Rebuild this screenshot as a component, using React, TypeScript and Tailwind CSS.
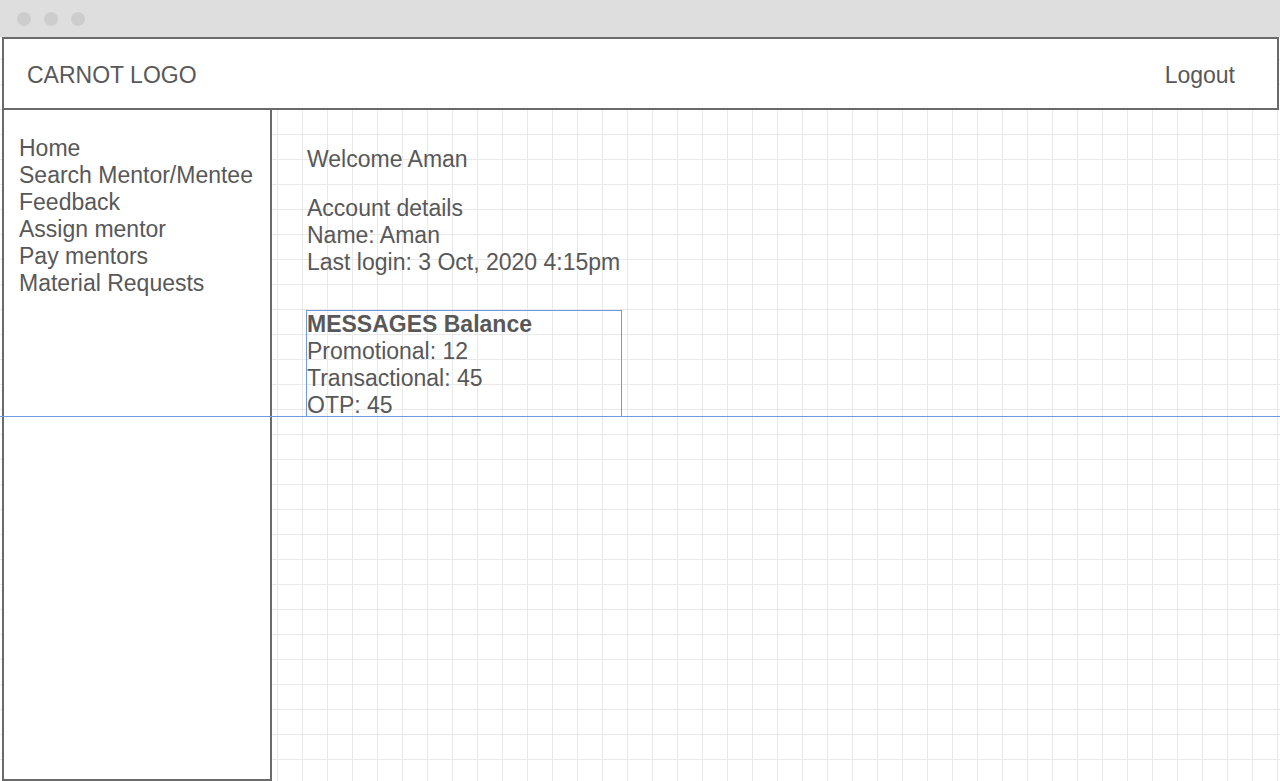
import React from "react";

const navItems = [
  "Home",
  "Search Mentor/Mentee",
  "Feedback",
  "Assign mentor",
  "Pay mentors",
  "Material Requests",
];

export default function App() {
  return (
    <div
      className="relative w-[1280px] h-[781px] overflow-hidden bg-white text-[#585858] flex flex-col"
      style={{ fontFamily: '"Liberation Sans", Arial, Helvetica, sans-serif' }}
    >
      {/* window chrome */}
      <div className="h-[37px] shrink-0 bg-[#dedede] flex items-center gap-[13px] pl-[17px]">
        <span className="w-[14px] h-[14px] rounded-full bg-[#cdcdcd]" />
        <span className="w-[14px] h-[14px] rounded-full bg-[#cdcdcd]" />
        <span className="w-[14px] h-[14px] rounded-full bg-[#cdcdcd]" />
      </div>

      {/* canvas */}
      <div className="flex-1 flex flex-col bg-white bg-[linear-gradient(to_right,#e9e9e9_1px,transparent_1px),linear-gradient(to_bottom,#e9e9e9_1px,transparent_1px)] bg-[size:25px_25px] bg-[position:2px_22px]">
        {/* header */}
        <div className="ml-[2px] mr-px h-[73px] shrink-0 bg-white border-2 border-[#6a6a6a] flex items-center justify-between pt-[4px] pl-[23px] pr-[42px] text-[23px]">
          <span>CARNOT LOGO</span>
          <span>Logout</span>
        </div>

        <div className="flex-1 flex -mt-[2px]">
          {/* sidebar */}
          <div className="ml-[2px] w-[270px] shrink-0 bg-white border-2 border-[#6a6a6a] pt-[25px] pl-[15px] text-[23px] leading-[27px]">
            {navItems.map((n) => (
              <div key={n}>{n}</div>
            ))}
          </div>

          {/* main */}
          <div className="flex-1 pl-[35px] pt-[38px] text-[23px] leading-[27px]">
            <div>Welcome Aman</div>
            <div className="mt-[22px]">Account details</div>
            <div>Name: Aman</div>
            <div>Last login: 3 Oct, 2020 4:15pm</div>
            <div className="mt-[34px] w-[316px] h-[107px] border border-[#6f9ae0] -ml-px">
              <div className="font-bold">MESSAGES Balance</div>
              <div>Promotional: 12</div>
              <div>Transactional: 45</div>
              <div>OTP: 45</div>
            </div>
          </div>
        </div>
      </div>

      {/* blue guide line */}
      <div className="absolute left-0 right-0 top-[416px] h-px bg-[#6f9ae0]" />
    </div>
  );
}
